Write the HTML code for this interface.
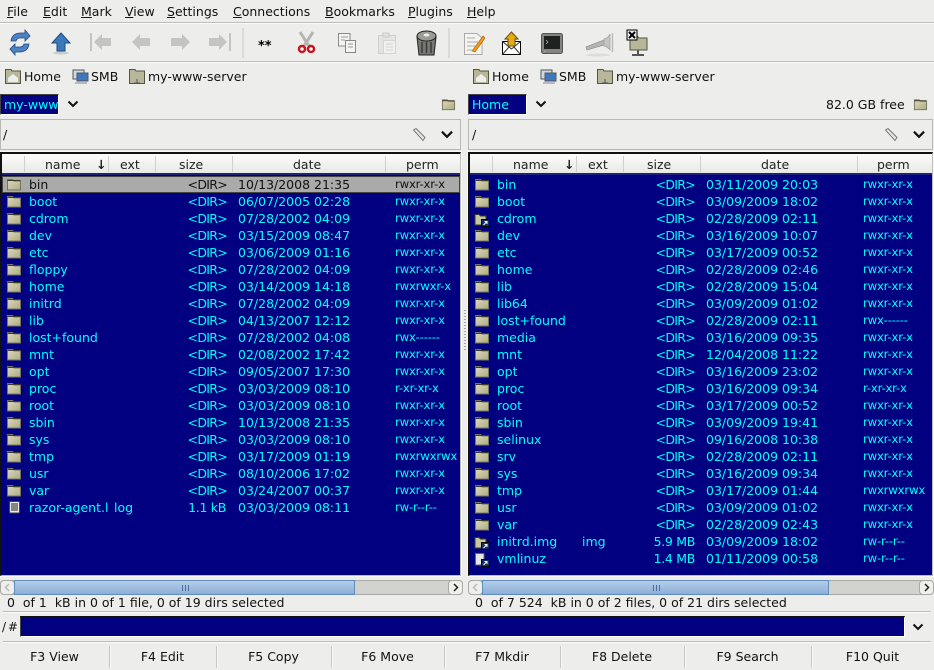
<!DOCTYPE html>
<html><head><meta charset="utf-8"><style>
html,body{margin:0;padding:0}
body{width:934px;height:670px;position:relative;overflow:hidden;background:#ededeb;font:12.5px/17px "DejaVu Sans",sans-serif;color:#111}
.a{position:absolute;white-space:nowrap}
.hl{position:absolute;height:1px;background:#bdbdb9;border-bottom:1px solid #fbfbfa}
.vl{position:absolute;width:1px;background:#c6c6c2;border-right:1px solid #fafaf9}
.m u{text-decoration:underline}
.panel{position:absolute;top:152px;height:424px;background:#000080;border:1px solid #bdbdb9;border-top:2px solid #111;border-left:2px solid #111;overflow:hidden;box-shadow:0 0 0 1px #f8f8f7;box-sizing:border-box}
.hdr{position:absolute;left:0;top:0;right:0;height:21px;background:linear-gradient(#fdfdfc,#e8e8e5);border-bottom:2px solid #202080;box-sizing:border-box}
.hdr i{position:absolute;top:2px;height:16px;width:1px;background:#cfcfcb}
.hdr span{position:absolute;top:2px;color:#222}
.r{position:absolute;left:0;right:0;height:17px;color:#00ffff}
.r span{position:absolute;top:0;white-space:nowrap}
.r svg{position:absolute;left:4px;top:2px}
.sel{background:#aaa;color:#111;box-shadow:inset 0 0 0 1px #444}
.L .n{left:27px}.L .e{left:100px}.L .s{right:233px;letter-spacing:-.7px}.L .d{left:236px}.L .p{left:393px;font-size:11.7px;letter-spacing:-.2px}
.R .n{left:26px}.R .e{left:110px}.R .s{right:237px;letter-spacing:-.7px}.R .d{left:236px}.R .p{left:393px;font-size:11.7px;letter-spacing:-.2px}
.box{position:absolute;box-sizing:border-box;border:1px solid #b8b8b4;background:#ededeb}
.sb{position:absolute;top:580px;height:15px;box-sizing:border-box;background:#d2d2ce;border:1px solid #a9a9a5;border-radius:4px}
.th{position:absolute;top:580px;height:15px;box-sizing:border-box;background:linear-gradient(#b4cde8,#8cafd8);border:1px solid #5f8bbd}
.th b{position:absolute;left:50%;top:4px;width:7px;height:6px;margin-left:-3px;background:repeating-linear-gradient(90deg,#4a6f9e 0 1px,transparent 1px 3px)}
.ab{position:absolute;top:580px;width:15px;height:15px;box-sizing:border-box;border:1px solid #a9a9a5;background:#efefec;border-radius:4px}
.fk{position:absolute;top:648px;text-align:center;color:#111}
</style></head><body>
<svg width="0" height="0" style="position:absolute"><defs>
<linearGradient id="fg" x1="0" y1="0" x2="1" y2="1"><stop offset="0" stop-color="#dcdabc"/><stop offset="1" stop-color="#aeac86"/></linearGradient>
<symbol id="f" viewBox="0 0 16 13"><path d="M1.500 1.500H6.500L8 3H14.500V12H1.500Z" fill="url(#fg)" stroke="#77765c"/><path d="M1.500 2.500H14.500" stroke="#3c3b28" stroke-width="1"/></symbol>
<symbol id="lk" viewBox="0 0 16 15"><path d="M1 2.500H5L6.500 4H12V13H1Z" fill="#c9c7a0" stroke="#3c3b28"/><rect x="7.500" y="7.500" width="8" height="7" fill="#fff" stroke="#000"/><rect x="8" y="8" width="7" height="6" fill="#12306a"/><path d="M9.500 13L13 9.500M10.500 9.500H13V12" stroke="#fff" fill="none"/></symbol>
<symbol id="fl" viewBox="0 0 16 15"><path d="M1.500 1.500H10V13H1.500Z" fill="#e6e6e6" stroke="#666"/><rect x="7.500" y="7.500" width="8" height="7" fill="#fff" stroke="#000"/><rect x="8" y="8" width="7" height="6" fill="#12306a"/><path d="M9.500 13L13 9.500M10.500 9.500H13V12" stroke="#fff" fill="none"/></symbol>
<symbol id="bm" viewBox="0 0 16 16"><path d="M.5 1.500H6L7 3H15.500V15.500H.5Z" fill="#b9b79a" stroke="#55543f"/></symbol>
<symbol id="chev" viewBox="0 0 12 8"><path d="M1.500 1.500L6 6L10.500 1.500" fill="none" stroke="#111" stroke-width="2"/></symbol>
</defs></svg>

<!-- menu -->
<div class="a m" style="left:7px;top:3px"><u>F</u>ile</div>
<div class="a m" style="left:43px;top:3px"><u>E</u>dit</div>
<div class="a m" style="left:81px;top:3px"><u>M</u>ark</div>
<div class="a m" style="left:125px;top:3px"><u>V</u>iew</div>
<div class="a m" style="left:167px;top:3px"><u>S</u>ettings</div>
<div class="a m" style="left:233px;top:3px"><u>C</u>onnections</div>
<div class="a m" style="left:325px;top:3px"><u>B</u>ookmarks</div>
<div class="a m" style="left:408px;top:3px"><u>P</u>lugins</div>
<div class="a m" style="left:467px;top:3px"><u>H</u>elp</div>
<div class="hl" style="left:0;top:22px;width:934px"></div>

<!-- toolbar -->
<svg class="a" style="left:0;top:24px" width="660" height="38">
<path d="M11 17Q12 9 21 9H25V6L30 12L25 17V14H20Q17 14 16 17Z" fill="#4a82c4" stroke="#1f4a85" stroke-width=".8"/>
<path d="M29 20Q28 28 19 28H15V31L10 25L15 20V23H20Q23 23 24 20Z" fill="#4a82c4" stroke="#1f4a85" stroke-width=".8"/>
<path d="M61 9L70 19H65V27H57V19H52Z" fill="#3b78bd" stroke="#1f4a85"/>
<ellipse cx="61" cy="29" rx="8" ry="1.500" fill="#ccc"/>
<rect x="90" y="9" width="2" height="18" fill="#c4c4c0"/>
<path d="M94 18L102 10V14H111V22H102V26Z" fill="#c4c4c0"/>
<path d="M132 18L140 10V14H150V22H140V26Z" fill="#c4c4c0"/>
<path d="M190 18L182 10V14H171V22H182V26Z" fill="#c4c4c0"/>
<path d="M227 18L219 10V14H209V22H219V26Z" fill="#c4c4c0"/>
<rect x="229" y="9" width="2" height="18" fill="#c4c4c0"/>
<path d="M243 4V34" stroke="#c6c6c2"/>
<text x="258" y="26" font-family="DejaVu Sans" font-weight="bold" font-size="13" fill="#000">**</text>
<path d="M300 8L309 22M313 8L304 22" stroke="#b4b4b0" stroke-width="3" fill="none"/>
<circle cx="302" cy="25" r="3" fill="#fff" stroke="#c8141c" stroke-width="2.500"/>
<circle cx="311" cy="25" r="3" fill="#fff" stroke="#c8141c" stroke-width="2.500"/>
<path d="M338.500 9.500H350V22H338.500Z" fill="#f4f4f2" stroke="#888"/>
<path d="M345.500 16.500H355.500V28.500H345.500Z" fill="#f4f4f2" stroke="#888"/>
<path d="M341 13H348M341 16H345M348 20H353M348 23H353" stroke="#999"/>
<path d="M378.500 11.500H395.500V29.500H378.500Z" fill="#e4e4e2" stroke="#d0d0cc"/>
<path d="M383.500 16.500H395.500V29.500H383.500Z" fill="#f1f1ef" stroke="#d4d4d0"/>
<path d="M386 20H393M386 23H393M386 26H393" stroke="#d4d4d0"/>
<rect x="383" y="9" width="6" height="4" fill="#e0e0de" stroke="#ccc"/>
<path d="M417 13H436L434 31H419Z" fill="#777773" stroke="#222"/>
<ellipse cx="426.500" cy="12" rx="9.500" ry="5" fill="#9a9a96" stroke="#222"/>
<ellipse cx="426.500" cy="11" rx="3" ry="1.500" fill="#eee"/>
<path d="M422 18V29M426.500 18V29M431 18V29" stroke="#3a3a38" stroke-width="1.500"/>
<path d="M449 4V34" stroke="#c6c6c2"/>
<path d="M464.500 9.500H477L482 14V30.500H464.500Z" fill="#f4f4f0" stroke="#aaa"/>
<path d="M467 14H475M467 18H478M467 22H476M467 26H472" stroke="#aaa"/>
<path d="M472 27L483 12L485 14L475 28Z" fill="#ef9a1d" stroke="#a55a00" stroke-width=".6"/>
<path d="M502.500 17.500H520.500V30.500H502.500Z" fill="#fff" stroke="#000"/>
<path d="M502.500 17.500L511.500 25L520.500 17.500M502.500 30.500L509 23M520.500 30.500L514 23" fill="none" stroke="#333"/>
<path d="M511.500 8L518 15H515V22H508V15H505Z" fill="#e3ab18" stroke="#6a4c00"/>
<rect x="541.500" y="9.500" width="21" height="20" rx="2" fill="#85857f" stroke="#555"/>
<rect x="544" y="12" width="16" height="13" fill="#1f2121"/>
<path d="M546 16L548 18L546 20" fill="none" stroke="#bbb" stroke-width=".7"/>
<rect x="544" y="27" width="2" height="1" fill="#6c6"/>
<path d="M586 23L604 16V21L587 26Z" fill="#b5b5b2" stroke="#8f8f8c" stroke-width=".7"/>
<path d="M604 15Q608 14 610 10V26Q608 23 604 22Z" fill="#c4c4c1" stroke="#a0a0a0" stroke-width=".7"/>
<path d="M612.500 9V28" stroke="#bcbcb8" stroke-width="1.500"/>
<ellipse cx="598" cy="31" rx="12" ry="1.500" fill="#dcdcda"/>
<path d="M630 12H637L639 14H647V26H630Z" fill="#b9b79a" stroke="#55543f"/>
<path d="M638 26V30M632 31H644" stroke="#555" stroke-width="2"/>
<rect x="627" y="6" width="10" height="10" fill="#eee" stroke="#000"/>
<path d="M629 8L635 14M635 8L629 14" stroke="#000" stroke-width="2"/>
</svg>
<div class="hl" style="left:0;top:61px;width:934px"></div>

<!-- bookmarks -->
<svg class="a" style="left:5px;top:68px" width="16" height="16"><use href="#bm"/><path d="M3 10L8 6L13 10V14H3Z" fill="#eee"/></svg>
<div class="a" style="left:24px;top:68px">Home</div>
<svg class="a" style="left:72px;top:68px" width="17" height="16"><rect x="1" y="2" width="11" height="9" fill="#cfd8e6" stroke="#555"/><rect x="5" y="5" width="11" height="8" fill="#3f78bf" stroke="#555"/><path d="M3 15H15" stroke="#888"/></svg>
<div class="a" style="left:91px;top:68px">SMB</div>
<svg class="a" style="left:129px;top:68px" width="16" height="16"><use href="#bm"/><path d="M8 11V15M5 15H11" stroke="#555"/></svg>
<div class="a" style="left:148px;top:68px">my-www-server</div>

<svg class="a" style="left:473px;top:68px" width="16" height="16"><use href="#bm"/><path d="M3 10L8 6L13 10V14H3Z" fill="#eee"/></svg>
<div class="a" style="left:492px;top:68px">Home</div>
<svg class="a" style="left:540px;top:68px" width="17" height="16"><rect x="1" y="2" width="11" height="9" fill="#cfd8e6" stroke="#555"/><rect x="5" y="5" width="11" height="8" fill="#3f78bf" stroke="#555"/><path d="M3 15H15" stroke="#888"/></svg>
<div class="a" style="left:559px;top:68px">SMB</div>
<svg class="a" style="left:597px;top:68px" width="16" height="16"><use href="#bm"/><path d="M8 11V15M5 15H11" stroke="#555"/></svg>
<div class="a" style="left:616px;top:68px">my-www-server</div>

<!-- drive row -->
<div class="a" style="left:0;top:94px;width:59px;height:21px;background:#000080;border-top:1px solid #444;border-left:1px solid #444;border-right:1px solid #fff;border-bottom:1px solid #fff;box-sizing:border-box;color:#00ffff;overflow:hidden;line-height:19px;padding-left:3px">my-www-server</div>
<svg class="a" style="left:67px;top:100px" width="12" height="8"><use href="#chev"/></svg>
<svg class="a" style="left:441px;top:98px" width="15" height="13"><use href="#f"/></svg>
<div class="a" style="left:468px;top:94px;width:59px;height:21px;background:#000080;border-top:1px solid #444;border-left:1px solid #444;border-right:1px solid #fff;border-bottom:1px solid #fff;box-sizing:border-box;color:#00ffff;line-height:19px;padding-left:3px">Home</div>
<svg class="a" style="left:535px;top:100px" width="12" height="8"><use href="#chev"/></svg>
<div class="a" style="left:826px;top:96px">82.0 GB free</div>
<svg class="a" style="left:913px;top:98px" width="15" height="13"><use href="#f"/></svg>

<!-- path boxes -->
<div class="box" style="left:0;top:119px;width:461px;height:31px"></div>
<div class="a" style="left:3px;top:126px">/</div>
<svg class="a" style="left:412px;top:127px" width="15" height="15"><path d="M1.500 3L4 1.500L13 10.500L11 13.500Z" fill="#e8e8e8" stroke="#777"/></svg>
<svg class="a" style="left:440px;top:130px" width="14" height="9" viewBox="0 0 12 8"><use href="#chev"/></svg>
<div class="box" style="left:468px;top:119px;width:465px;height:31px"></div>
<div class="a" style="left:472px;top:126px">/</div>
<svg class="a" style="left:884px;top:127px" width="15" height="15"><path d="M1.500 3L4 1.500L13 10.500L11 13.500Z" fill="#e8e8e8" stroke="#777"/></svg>
<svg class="a" style="left:912px;top:130px" width="14" height="9" viewBox="0 0 12 8"><use href="#chev"/></svg>

<!-- left panel -->
<div class="panel L" style="left:0;width:461px">
<div class="hdr"><i style="left:22px"></i><span style="left:43px">name</span><span style="left:94px;font-weight:bold">↓</span><i style="left:106px"></i><span style="left:118px">ext</span><i style="left:153px"></i><span style="left:177px">size</span><i style="left:230px"></i><span style="left:291px">date</span><i style="left:383px"></i><span style="left:404px">perm</span></div>
<div class="r sel" style="top:22px"><svg width="16" height="13"><use href="#f"/></svg><span class="n">bin</span><span class="s">&lt;DIR&gt;</span><span class="d">10/13/2008 21:35</span><span class="p">rwxr-xr-x</span></div>
<div class="r" style="top:39px"><svg width="16" height="13"><use href="#f"/></svg><span class="n">boot</span><span class="s">&lt;DIR&gt;</span><span class="d">06/07/2005 02:28</span><span class="p">rwxr-xr-x</span></div>
<div class="r" style="top:56px"><svg width="16" height="13"><use href="#f"/></svg><span class="n">cdrom</span><span class="s">&lt;DIR&gt;</span><span class="d">07/28/2002 04:09</span><span class="p">rwxr-xr-x</span></div>
<div class="r" style="top:73px"><svg width="16" height="13"><use href="#f"/></svg><span class="n">dev</span><span class="s">&lt;DIR&gt;</span><span class="d">03/15/2009 08:47</span><span class="p">rwxr-xr-x</span></div>
<div class="r" style="top:90px"><svg width="16" height="13"><use href="#f"/></svg><span class="n">etc</span><span class="s">&lt;DIR&gt;</span><span class="d">03/06/2009 01:16</span><span class="p">rwxr-xr-x</span></div>
<div class="r" style="top:107px"><svg width="16" height="13"><use href="#f"/></svg><span class="n">floppy</span><span class="s">&lt;DIR&gt;</span><span class="d">07/28/2002 04:09</span><span class="p">rwxr-xr-x</span></div>
<div class="r" style="top:124px"><svg width="16" height="13"><use href="#f"/></svg><span class="n">home</span><span class="s">&lt;DIR&gt;</span><span class="d">03/14/2009 14:18</span><span class="p">rwxrwxr-x</span></div>
<div class="r" style="top:141px"><svg width="16" height="13"><use href="#f"/></svg><span class="n">initrd</span><span class="s">&lt;DIR&gt;</span><span class="d">07/28/2002 04:09</span><span class="p">rwxr-xr-x</span></div>
<div class="r" style="top:158px"><svg width="16" height="13"><use href="#f"/></svg><span class="n">lib</span><span class="s">&lt;DIR&gt;</span><span class="d">04/13/2007 12:12</span><span class="p">rwxr-xr-x</span></div>
<div class="r" style="top:175px"><svg width="16" height="13"><use href="#f"/></svg><span class="n">lost+found</span><span class="s">&lt;DIR&gt;</span><span class="d">07/28/2002 04:08</span><span class="p">rwx------</span></div>
<div class="r" style="top:192px"><svg width="16" height="13"><use href="#f"/></svg><span class="n">mnt</span><span class="s">&lt;DIR&gt;</span><span class="d">02/08/2002 17:42</span><span class="p">rwxr-xr-x</span></div>
<div class="r" style="top:209px"><svg width="16" height="13"><use href="#f"/></svg><span class="n">opt</span><span class="s">&lt;DIR&gt;</span><span class="d">09/05/2007 17:30</span><span class="p">rwxr-xr-x</span></div>
<div class="r" style="top:226px"><svg width="16" height="13"><use href="#f"/></svg><span class="n">proc</span><span class="s">&lt;DIR&gt;</span><span class="d">03/03/2009 08:10</span><span class="p">r-xr-xr-x</span></div>
<div class="r" style="top:243px"><svg width="16" height="13"><use href="#f"/></svg><span class="n">root</span><span class="s">&lt;DIR&gt;</span><span class="d">03/03/2009 08:10</span><span class="p">rwxr-xr-x</span></div>
<div class="r" style="top:260px"><svg width="16" height="13"><use href="#f"/></svg><span class="n">sbin</span><span class="s">&lt;DIR&gt;</span><span class="d">10/13/2008 21:35</span><span class="p">rwxr-xr-x</span></div>
<div class="r" style="top:277px"><svg width="16" height="13"><use href="#f"/></svg><span class="n">sys</span><span class="s">&lt;DIR&gt;</span><span class="d">03/03/2009 08:10</span><span class="p">rwxr-xr-x</span></div>
<div class="r" style="top:294px"><svg width="16" height="13"><use href="#f"/></svg><span class="n">tmp</span><span class="s">&lt;DIR&gt;</span><span class="d">03/17/2009 01:19</span><span class="p">rwxrwxrwx</span></div>
<div class="r" style="top:311px"><svg width="16" height="13"><use href="#f"/></svg><span class="n">usr</span><span class="s">&lt;DIR&gt;</span><span class="d">08/10/2006 17:02</span><span class="p">rwxr-xr-x</span></div>
<div class="r" style="top:328px"><svg width="16" height="13"><use href="#f"/></svg><span class="n">var</span><span class="s">&lt;DIR&gt;</span><span class="d">03/24/2007 00:37</span><span class="p">rwxr-xr-x</span></div>
<div class="r" style="top:345px"><svg width="16" height="14" viewBox="0 0 16 14" style="top:1px"><rect x="3.500" y="1.500" width="10" height="11.500" rx="1" fill="#e8e8e4" stroke="#444"/><path d="M5 4H12M5 6H12M5 8H12M5 10H12" stroke="#222"/></svg><span class="n">razor-agent.l</span><span class="e" style="left:112px">log</span><span class="s" style="letter-spacing:-.3px;right:234px">1.1 kB</span><span class="d">03/03/2009 08:11</span><span class="p">rw-r--r--</span></div>
</div>

<!-- right panel -->
<div class="panel R" style="left:468px;width:465px">
<div class="hdr"><i style="left:22px"></i><span style="left:43px">name</span><span style="left:94px;font-weight:bold">↓</span><i style="left:106px"></i><span style="left:118px">ext</span><i style="left:153px"></i><span style="left:177px">size</span><i style="left:230px"></i><span style="left:291px">date</span><i style="left:387px"></i><span style="left:407px">perm</span></div>
<div class="r" style="top:22px"><svg width="16" height="13"><use href="#f"/></svg><span class="n" style="left:27px">bin</span><span class="s">&lt;DIR&gt;</span><span class="d">03/11/2009 20:03</span><span class="p">rwxr-xr-x</span></div>
<div class="r" style="top:39px"><svg width="16" height="13"><use href="#f"/></svg><span class="n" style="left:27px">boot</span><span class="s">&lt;DIR&gt;</span><span class="d">03/09/2009 18:02</span><span class="p">rwxr-xr-x</span></div>
<div class="r" style="top:56px"><svg width="16" height="15"><use href="#lk"/></svg><span class="n" style="left:27px">cdrom</span><span class="s">&lt;DIR&gt;</span><span class="d">02/28/2009 02:11</span><span class="p">rwxr-xr-x</span></div>
<div class="r" style="top:73px"><svg width="16" height="13"><use href="#f"/></svg><span class="n" style="left:27px">dev</span><span class="s">&lt;DIR&gt;</span><span class="d">03/16/2009 10:07</span><span class="p">rwxr-xr-x</span></div>
<div class="r" style="top:90px"><svg width="16" height="13"><use href="#f"/></svg><span class="n" style="left:27px">etc</span><span class="s">&lt;DIR&gt;</span><span class="d">03/17/2009 00:52</span><span class="p">rwxr-xr-x</span></div>
<div class="r" style="top:107px"><svg width="16" height="13"><use href="#f"/></svg><span class="n" style="left:27px">home</span><span class="s">&lt;DIR&gt;</span><span class="d">02/28/2009 02:46</span><span class="p">rwxr-xr-x</span></div>
<div class="r" style="top:124px"><svg width="16" height="13"><use href="#f"/></svg><span class="n" style="left:27px">lib</span><span class="s">&lt;DIR&gt;</span><span class="d">02/28/2009 15:04</span><span class="p">rwxr-xr-x</span></div>
<div class="r" style="top:141px"><svg width="16" height="13"><use href="#f"/></svg><span class="n" style="left:27px">lib64</span><span class="s">&lt;DIR&gt;</span><span class="d">03/09/2009 01:02</span><span class="p">rwxr-xr-x</span></div>
<div class="r" style="top:158px"><svg width="16" height="13"><use href="#f"/></svg><span class="n" style="left:27px">lost+found</span><span class="s">&lt;DIR&gt;</span><span class="d">02/28/2009 02:11</span><span class="p">rwx------</span></div>
<div class="r" style="top:175px"><svg width="16" height="13"><use href="#f"/></svg><span class="n" style="left:27px">media</span><span class="s">&lt;DIR&gt;</span><span class="d">03/16/2009 09:35</span><span class="p">rwxr-xr-x</span></div>
<div class="r" style="top:192px"><svg width="16" height="13"><use href="#f"/></svg><span class="n" style="left:27px">mnt</span><span class="s">&lt;DIR&gt;</span><span class="d">12/04/2008 11:22</span><span class="p">rwxr-xr-x</span></div>
<div class="r" style="top:209px"><svg width="16" height="13"><use href="#f"/></svg><span class="n" style="left:27px">opt</span><span class="s">&lt;DIR&gt;</span><span class="d">03/16/2009 23:02</span><span class="p">rwxr-xr-x</span></div>
<div class="r" style="top:226px"><svg width="16" height="13"><use href="#f"/></svg><span class="n" style="left:27px">proc</span><span class="s">&lt;DIR&gt;</span><span class="d">03/16/2009 09:34</span><span class="p">r-xr-xr-x</span></div>
<div class="r" style="top:243px"><svg width="16" height="13"><use href="#f"/></svg><span class="n" style="left:27px">root</span><span class="s">&lt;DIR&gt;</span><span class="d">03/17/2009 00:52</span><span class="p">rwxr-xr-x</span></div>
<div class="r" style="top:260px"><svg width="16" height="13"><use href="#f"/></svg><span class="n" style="left:27px">sbin</span><span class="s">&lt;DIR&gt;</span><span class="d">03/09/2009 19:41</span><span class="p">rwxr-xr-x</span></div>
<div class="r" style="top:277px"><svg width="16" height="13"><use href="#f"/></svg><span class="n" style="left:27px">selinux</span><span class="s">&lt;DIR&gt;</span><span class="d">09/16/2008 10:38</span><span class="p">rwxr-xr-x</span></div>
<div class="r" style="top:294px"><svg width="16" height="13"><use href="#f"/></svg><span class="n" style="left:27px">srv</span><span class="s">&lt;DIR&gt;</span><span class="d">02/28/2009 02:11</span><span class="p">rwxr-xr-x</span></div>
<div class="r" style="top:311px"><svg width="16" height="13"><use href="#f"/></svg><span class="n" style="left:27px">sys</span><span class="s">&lt;DIR&gt;</span><span class="d">03/16/2009 09:34</span><span class="p">rwxr-xr-x</span></div>
<div class="r" style="top:328px"><svg width="16" height="13"><use href="#f"/></svg><span class="n" style="left:27px">tmp</span><span class="s">&lt;DIR&gt;</span><span class="d">03/17/2009 01:44</span><span class="p">rwxrwxrwx</span></div>
<div class="r" style="top:345px"><svg width="16" height="13"><use href="#f"/></svg><span class="n" style="left:27px">usr</span><span class="s">&lt;DIR&gt;</span><span class="d">03/09/2009 01:02</span><span class="p">rwxr-xr-x</span></div>
<div class="r" style="top:362px"><svg width="16" height="13"><use href="#f"/></svg><span class="n" style="left:27px">var</span><span class="s">&lt;DIR&gt;</span><span class="d">02/28/2009 02:43</span><span class="p">rwxr-xr-x</span></div>
<div class="r" style="top:379px"><svg width="16" height="15"><use href="#lk"/></svg><span class="n" style="left:27px">initrd.img</span><span class="e" style="left:112px">img</span><span class="s" style="letter-spacing:-.3px">5.9 MB</span><span class="d">03/09/2009 18:02</span><span class="p">rw-r--r--</span></div>
<div class="r" style="top:396px"><svg width="16" height="15"><use href="#fl"/></svg><span class="n" style="left:27px">vmlinuz</span><span class="s" style="letter-spacing:-.3px">1.4 MB</span><span class="d">01/11/2009 00:58</span><span class="p">rw-r--r--</span></div>
</div>

<!-- splitter dots -->
<div class="a" style="left:464px;top:310px;width:2px;height:40px;background:repeating-linear-gradient(#aaa 0 1px,transparent 1px 3px)"></div>

<!-- scrollbars -->
<div class="sb" style="left:0;width:463px"></div>
<div class="ab" style="left:0"><svg width="13" height="13"><path d="M8 3L4.500 6.500L8 10" fill="none" stroke="#bbb" stroke-width="1.500"/></svg></div>
<div class="th" style="left:14px;width:341px"><b></b></div>
<div class="ab" style="left:448px"><svg width="13" height="13"><path d="M5 3L8.500 6.500L5 10" fill="none" stroke="#222" stroke-width="1.500"/></svg></div>
<div class="sb" style="left:468px;width:466px"></div>
<div class="ab" style="left:468px"><svg width="13" height="13"><path d="M8 3L4.500 6.500L8 10" fill="none" stroke="#bbb" stroke-width="1.500"/></svg></div>
<div class="th" style="left:482px;width:347px"><b></b></div>
<div class="ab" style="left:919px"><svg width="13" height="13"><path d="M5 3L8.500 6.500L5 10" fill="none" stroke="#222" stroke-width="1.500"/></svg></div>

<!-- status -->
<div class="a" style="left:7px;top:594px">0&nbsp; of 1&nbsp; kB in 0 of 1 file, 0 of 19 dirs selected</div>
<div class="a" style="left:475px;top:594px">0&nbsp; of 7 524&nbsp; kB in 0 of 2 files, 0 of 21 dirs selected</div>
<div class="hl" style="left:3px;top:611px;width:928px"></div>

<!-- command line -->
<div class="a" style="left:2px;top:619px;letter-spacing:-1px;font-size:12px">/ #</div>
<div class="a" style="left:20px;top:616px;width:885px;height:21px;background:#000080;border-top:2px solid #111;border-left:1px solid #444;border-right:1px solid #fff;border-bottom:1px solid #fff;box-sizing:border-box"></div>
<svg class="a" style="left:912px;top:623px" width="12" height="8"><use href="#chev"/></svg>
<div class="hl" style="left:3px;top:641px;width:928px"></div>

<!-- function keys -->
<div class="vl" style="left:109px;top:646px;height:22px"></div>
<div class="vl" style="left:216px;top:646px;height:22px"></div>
<div class="vl" style="left:331px;top:646px;height:22px"></div>
<div class="vl" style="left:444px;top:646px;height:22px"></div>
<div class="vl" style="left:560px;top:646px;height:22px"></div>
<div class="vl" style="left:684px;top:646px;height:22px"></div>
<div class="vl" style="left:811px;top:646px;height:22px"></div>
<div class="fk" style="left:0;width:109px">F3 View</div>
<div class="fk" style="left:109px;width:107px">F4 Edit</div>
<div class="fk" style="left:216px;width:115px">F5 Copy</div>
<div class="fk" style="left:331px;width:113px">F6 Move</div>
<div class="fk" style="left:444px;width:116px">F7 Mkdir</div>
<div class="fk" style="left:560px;width:124px">F8 Delete</div>
<div class="fk" style="left:684px;width:127px">F9 Search</div>
<div class="fk" style="left:811px;width:123px">F10 Quit</div>
</body></html>
